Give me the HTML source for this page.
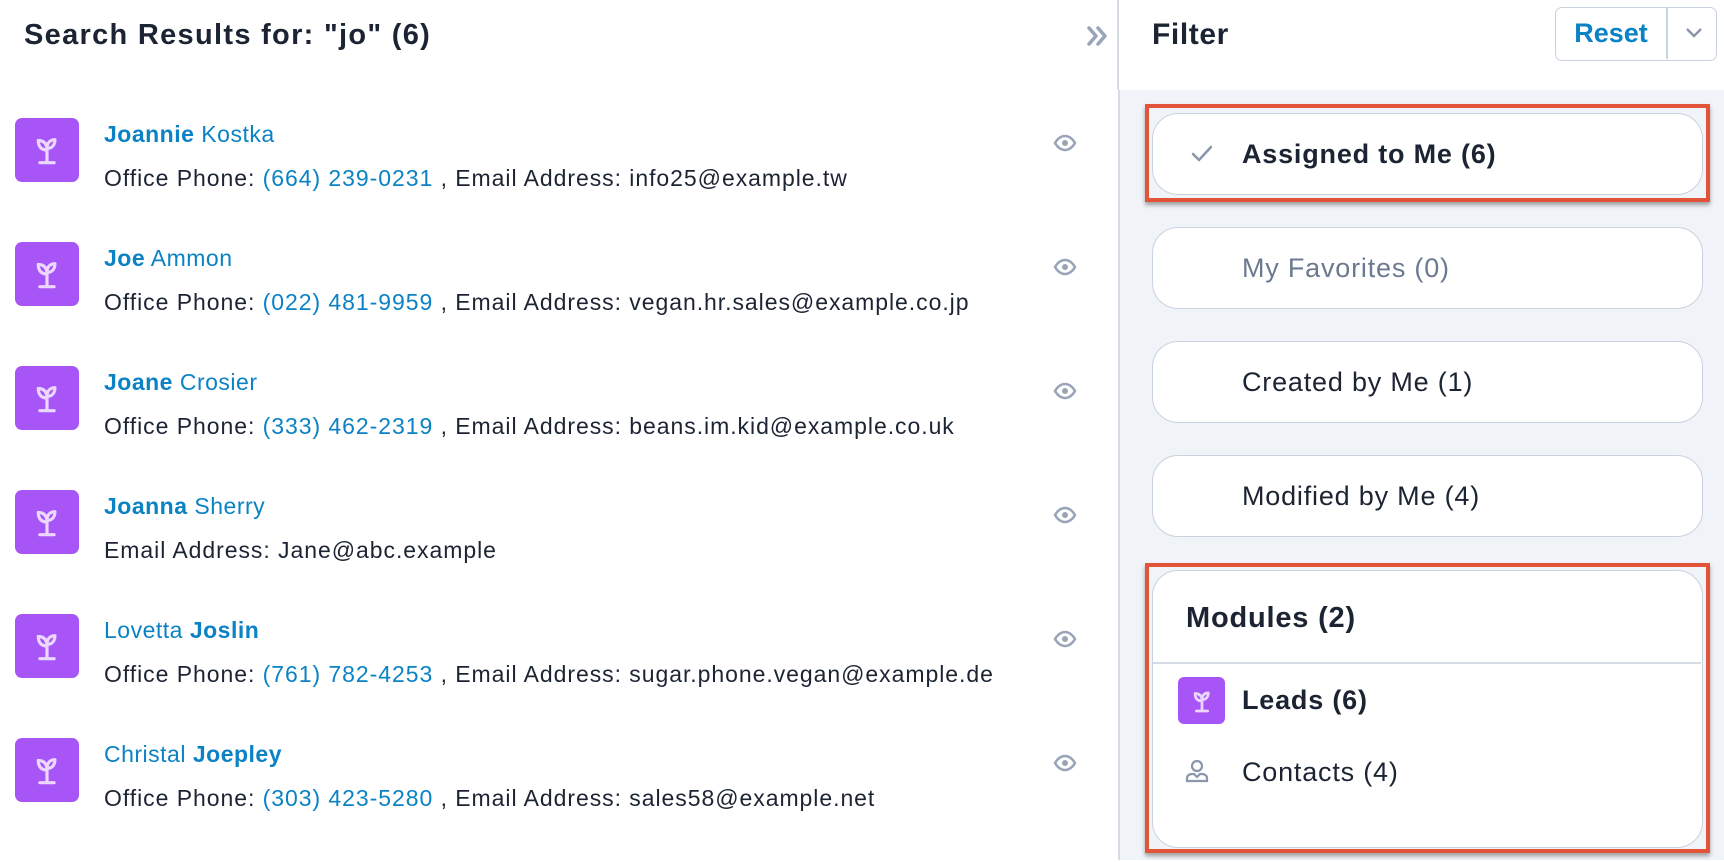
<!DOCTYPE html>
<html><head><meta charset="utf-8"><style>
*{box-sizing:border-box;margin:0;padding:0}
body{width:1724px;height:860px;overflow:hidden;background:#fff;font-family:"Liberation Sans",sans-serif;color:#1c2433;position:relative}
.abs{position:absolute}
.title{left:24px;top:19px;font-size:29px;font-weight:bold;white-space:nowrap;letter-spacing:1.3px}
.row{position:absolute;left:0;width:1100px;height:124px}
.ic{position:absolute;left:15px;width:64px;height:64px;border-radius:7px;background:#a855f7;display:flex;align-items:center;justify-content:center}
.name{position:absolute;left:104px;font-size:23px;color:#0b82c4;white-space:nowrap;letter-spacing:0.5px}
.name b{font-weight:bold}
.det{position:absolute;left:104px;font-size:23px;color:#1c2433;white-space:nowrap;letter-spacing:0.95px}
.det a{color:#0b82c4;text-decoration:none}
.eye{position:absolute;left:1053px}
.panel{left:1118px;top:90px;width:606px;height:770px;background:#f0f3f8;border-left:2px solid #d5dbe5}
.vline{left:1117px;top:0;width:2px;height:90px;background:#d5dbe5}
.pill{position:absolute;left:1152px;width:551px;height:82px;border:1.5px solid #c9d2df;border-radius:26px;background:#fff;font-size:27px;display:flex;align-items:center;padding-left:89px;white-space:nowrap;letter-spacing:0.8px}
.red{position:absolute;border:4px solid #e2533a;box-shadow:0 3px 4px rgba(0,0,0,.35)}
</style></head><body>
<div class="abs title">Search Results for: "jo" (6)</div>
<div class="abs vline"></div>
<svg class="abs" style="left:1086px;top:25px" width="24" height="22" viewBox="0 0 24 22"><path d="M3 3l7 8-7 8M12 3l7 8-7 8" fill="none" stroke="#98a4b8" stroke-width="3.5" stroke-linecap="round" stroke-linejoin="round"/></svg>
<div class="abs" style="left:1152px;top:18px;font-size:30px;font-weight:bold;letter-spacing:0.6px">Filter</div>
<div class="abs" style="left:1555px;top:7px;width:162px;height:54px;border:1.5px solid #c9d2df;border-radius:7px;background:#fff">
<div class="abs" style="left:0;top:0;width:110px;height:51px;display:flex;align-items:center;justify-content:center;color:#0b82c4;font-weight:bold;font-size:27px">Reset</div>
<div class="abs" style="left:110px;top:0;width:1.5px;height:51px;background:#c9d2df"></div>
<svg class="abs" style="left:128px;top:18px" width="20" height="14" viewBox="0 0 20 14"><path d="M3 3l7 7 7-7" fill="none" stroke="#8a96aa" stroke-width="2.5"/></svg>
</div>
<div class="abs panel"></div>

<div class="row" style="top:118px"><div class="ic" style="top:0"><svg width="38" height="38" viewBox="0 0 24 24" fill="none" stroke="#ecd7ff" stroke-width="2" stroke-linecap="round" stroke-linejoin="round"><path d="M12 20V11M7.5 20h9M12 12c-3.5 0-5.5-2-5.5-6 3.5 0 5.5 2 5.5 6zM12 11c0-3.5 2-5.5 5-5.5 0 3.5-2 5.5-5 5.5z"/></svg></div>
<div class="name" style="top:3px"><b>Joannie</b> Kostka</div><div class="det" style="top:47px">Office Phone: <a>(664) 239-0231</a> , Email Address: info25@example.tw</div>
<svg class="eye" style="top:15px" width="24" height="20" viewBox="0 0 24 20"><path d="M2 10c3-5 6-7 10-7s7 2 10 7c-3 5-6 7-10 7S5 15 2 10z" fill="none" stroke="#98a4b8" stroke-width="2.5"/><circle cx="12" cy="10" r="3" fill="#98a4b8"/></svg></div>

<div class="row" style="top:242px"><div class="ic" style="top:0"><svg width="38" height="38" viewBox="0 0 24 24" fill="none" stroke="#ecd7ff" stroke-width="2" stroke-linecap="round" stroke-linejoin="round"><path d="M12 20V11M7.5 20h9M12 12c-3.5 0-5.5-2-5.5-6 3.5 0 5.5 2 5.5 6zM12 11c0-3.5 2-5.5 5-5.5 0 3.5-2 5.5-5 5.5z"/></svg></div>
<div class="name" style="top:3px"><b>Joe</b> Ammon</div><div class="det" style="top:47px">Office Phone: <a>(022) 481-9959</a> , Email Address: vegan.hr.sales@example.co.jp</div>
<svg class="eye" style="top:15px" width="24" height="20" viewBox="0 0 24 20"><path d="M2 10c3-5 6-7 10-7s7 2 10 7c-3 5-6 7-10 7S5 15 2 10z" fill="none" stroke="#98a4b8" stroke-width="2.5"/><circle cx="12" cy="10" r="3" fill="#98a4b8"/></svg></div>

<div class="row" style="top:366px"><div class="ic" style="top:0"><svg width="38" height="38" viewBox="0 0 24 24" fill="none" stroke="#ecd7ff" stroke-width="2" stroke-linecap="round" stroke-linejoin="round"><path d="M12 20V11M7.5 20h9M12 12c-3.5 0-5.5-2-5.5-6 3.5 0 5.5 2 5.5 6zM12 11c0-3.5 2-5.5 5-5.5 0 3.5-2 5.5-5 5.5z"/></svg></div>
<div class="name" style="top:3px"><b>Joane</b> Crosier</div><div class="det" style="top:47px">Office Phone: <a>(333) 462-2319</a> , Email Address: beans.im.kid@example.co.uk</div>
<svg class="eye" style="top:15px" width="24" height="20" viewBox="0 0 24 20"><path d="M2 10c3-5 6-7 10-7s7 2 10 7c-3 5-6 7-10 7S5 15 2 10z" fill="none" stroke="#98a4b8" stroke-width="2.5"/><circle cx="12" cy="10" r="3" fill="#98a4b8"/></svg></div>

<div class="row" style="top:490px"><div class="ic" style="top:0"><svg width="38" height="38" viewBox="0 0 24 24" fill="none" stroke="#ecd7ff" stroke-width="2" stroke-linecap="round" stroke-linejoin="round"><path d="M12 20V11M7.5 20h9M12 12c-3.5 0-5.5-2-5.5-6 3.5 0 5.5 2 5.5 6zM12 11c0-3.5 2-5.5 5-5.5 0 3.5-2 5.5-5 5.5z"/></svg></div>
<div class="name" style="top:3px"><b>Joanna</b> Sherry</div><div class="det" style="top:47px">Email Address: Jane@abc.example</div>
<svg class="eye" style="top:15px" width="24" height="20" viewBox="0 0 24 20"><path d="M2 10c3-5 6-7 10-7s7 2 10 7c-3 5-6 7-10 7S5 15 2 10z" fill="none" stroke="#98a4b8" stroke-width="2.5"/><circle cx="12" cy="10" r="3" fill="#98a4b8"/></svg></div>

<div class="row" style="top:614px"><div class="ic" style="top:0"><svg width="38" height="38" viewBox="0 0 24 24" fill="none" stroke="#ecd7ff" stroke-width="2" stroke-linecap="round" stroke-linejoin="round"><path d="M12 20V11M7.5 20h9M12 12c-3.5 0-5.5-2-5.5-6 3.5 0 5.5 2 5.5 6zM12 11c0-3.5 2-5.5 5-5.5 0 3.5-2 5.5-5 5.5z"/></svg></div>
<div class="name" style="top:3px">Lovetta <b>Joslin</b></div><div class="det" style="top:47px">Office Phone: <a>(761) 782-4253</a> , Email Address: sugar.phone.vegan@example.de</div>
<svg class="eye" style="top:15px" width="24" height="20" viewBox="0 0 24 20"><path d="M2 10c3-5 6-7 10-7s7 2 10 7c-3 5-6 7-10 7S5 15 2 10z" fill="none" stroke="#98a4b8" stroke-width="2.5"/><circle cx="12" cy="10" r="3" fill="#98a4b8"/></svg></div>

<div class="row" style="top:738px"><div class="ic" style="top:0"><svg width="38" height="38" viewBox="0 0 24 24" fill="none" stroke="#ecd7ff" stroke-width="2" stroke-linecap="round" stroke-linejoin="round"><path d="M12 20V11M7.5 20h9M12 12c-3.5 0-5.5-2-5.5-6 3.5 0 5.5 2 5.5 6zM12 11c0-3.5 2-5.5 5-5.5 0 3.5-2 5.5-5 5.5z"/></svg></div>
<div class="name" style="top:3px">Christal <b>Joepley</b></div><div class="det" style="top:47px">Office Phone: <a>(303) 423-5280</a> , Email Address: sales58@example.net</div>
<svg class="eye" style="top:15px" width="24" height="20" viewBox="0 0 24 20"><path d="M2 10c3-5 6-7 10-7s7 2 10 7c-3 5-6 7-10 7S5 15 2 10z" fill="none" stroke="#98a4b8" stroke-width="2.5"/><circle cx="12" cy="10" r="3" fill="#98a4b8"/></svg></div>

<div class="pill" style="top:113px;font-weight:bold"><svg class="abs" style="left:37px;top:30px" width="24" height="20" viewBox="0 0 24 20"><path d="M3 10l6 6L21 3" fill="none" stroke="#8a96aa" stroke-width="2.5" stroke-linecap="round"/></svg>Assigned to Me (6)</div>
<div class="red" style="left:1145px;top:104px;width:565px;height:98px"></div>
<div class="pill" style="top:227px;color:#6b7a90">My Favorites (0)</div>
<div class="pill" style="top:341px">Created by Me (1)</div>
<div class="pill" style="top:455px">Modified by Me (4)</div>

<div class="abs" style="left:1152px;top:570px;width:551px;height:278px;border:1.5px solid #c9d2df;border-radius:26px;background:#fff">
<div class="abs" style="left:33px;top:31px;font-size:29px;font-weight:bold;letter-spacing:0.8px">Modules (2)</div>
<div class="abs" style="left:0;top:91px;width:548px;height:2px;background:#d5dbe5"></div>
<div class="abs" style="left:25px;top:106px;width:47px;height:47px;border-radius:6px;background:#a855f7;display:flex;align-items:center;justify-content:center"><svg width="30" height="30" viewBox="0 0 24 24" fill="none" stroke="#ecd7ff" stroke-width="2.2" stroke-linecap="round" stroke-linejoin="round"><path d="M12 20V11M7.5 20h9M12 12c-3.5 0-5.5-2-5.5-6 3.5 0 5.5 2 5.5 6zM12 11c0-3.5 2-5.5 5-5.5 0 3.5-2 5.5-5 5.5z"/></svg></div>
<div class="abs" style="left:89px;top:114px;font-size:27px;font-weight:bold;letter-spacing:0.8px">Leads (6)</div>
<svg class="abs" style="left:30px;top:186px" width="28" height="28" viewBox="0 0 28 28" fill="none" stroke="#8a96aa" stroke-width="2.2"><circle cx="14" cy="9" r="5"/><path d="M4 24v-3c0-2 2-4 5-4h2l3 3 3-3h2c3 0 5 2 5 4v3z"/></svg>
<div class="abs" style="left:89px;top:186px;font-size:27px;letter-spacing:0.8px">Contacts (4)</div>
</div>
<div class="red" style="left:1145px;top:563px;width:565px;height:290px"></div>
</body></html>
